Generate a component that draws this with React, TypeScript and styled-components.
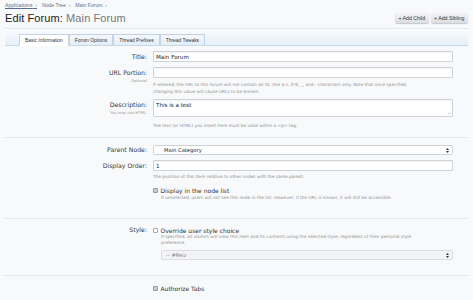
import React from "react";
import styled, { createGlobalStyle } from "styled-components";

const GlobalStyle = createGlobalStyle`
  html, body {
    margin: 0;
    padding: 0;
    background: #f8f9fb;
  }
  body {
    font-family: "DejaVu Sans", "Liberation Sans", sans-serif;
    color: #333;
  }
`;

const Page = styled.div`
  width: 473px;
  height: 300px;
  overflow: hidden;
  padding: 2px 5px 0 5px;
  box-sizing: border-box;
`;

const Header = styled.div`
  display: flex;
  justify-content: space-between;
  align-items: flex-start;
`;

const Breadcrumb = styled.div`
  display: flex;
  gap: 5px;
  font-family: "Liberation Sans", sans-serif;
  font-size: 5.1px;
  line-height: 6px;
  color: #5a6f8f;
`;

const Crumb = styled.span<{ $underline?: boolean }>`
  text-decoration: ${(p) => (p.$underline ? "underline" : "none")};
  &::after {
    content: "  \u203A";
    white-space: pre;
    color: #8a97aa;
  }
`;

const Title = styled.h1`
  margin: 4px 0 0 0;
  font-family: "Liberation Sans", sans-serif;
  font-weight: normal;
  font-size: 11px;
  line-height: 12px;
  color: #222;
  letter-spacing: 0.1px;
`;

const Muted = styled.span`
  color: #777;
`;

const Buttons = styled.div`
  display: flex;
  gap: 2px;
  margin-top: 11px;
`;

const Button = styled.span`
  display: inline-flex;
  align-items: center;
  height: 10px;
  padding: 0 3.5px;
  border-radius: 2px;
  background: linear-gradient(#f4f4f7, #dcdde2);
  box-shadow: 0 0.5px 1px rgba(0, 0, 0, 0.2);
  font-family: "Liberation Sans", sans-serif;
  font-size: 5.2px;
  color: #333;
  white-space: nowrap;
`;

const TabBar = styled.div`
  margin-top: 4px;
  height: 18px;
  box-sizing: border-box;
  border-top: 1px solid #e3e9f0;
  border-bottom: 1px solid #c9d8e7;
  background: linear-gradient(#fafcfe, #e6f0f9);
  display: flex;
  align-items: flex-end;
  padding-left: 14px;
`;

const Tab = styled.span<{ $active?: boolean }>`
  height: 12px;
  box-sizing: border-box;
  margin-bottom: -1px;
  display: inline-flex;
  align-items: center;
  padding: 0 5px;
  border: 0.5px solid #c3d3e4;
  border-bottom: ${(p) => (p.$active ? "1px solid #fff" : "1px solid #c9d8e7")};
  background: ${(p) => (p.$active ? "#fff" : "linear-gradient(#f3f8fc, #e4eef8)")};
  font-family: "Liberation Sans", sans-serif;
  font-size: 4.9px;
  color: #333;
  white-space: nowrap;
`;

const Form = styled.div`
  padding-top: 5px;
  display: flex;
  flex-direction: column;
`;

const Row = styled.div<{ $mt?: number }>`
  display: grid;
  grid-template-columns: 142px 300px;
  column-gap: 6px;
  margin-top: ${(p) => p.$mt ?? 0}px;
`;

const LabelCell = styled.div`
  text-align: right;
`;

const Label = styled.div<{ $lh?: number }>`
  font-size: 6.2px;
  line-height: ${(p) => p.$lh ?? 11}px;
  color: #3a3a3a;
`;

const Hint = styled.div`
  font-size: 3.8px;
  line-height: 5px;
  color: #999;
`;

const Field = styled.div<{ $h?: number; $pad?: number }>`
  height: ${(p) => p.$h ?? 11}px;
  box-sizing: border-box;
  border: 0.5px solid #cfd2d8;
  border-radius: 1px;
  background: #fff;
  box-shadow: inset 0 0.5px 1px rgba(0, 0, 0, 0.08);
  padding: 0 ${(p) => p.$pad ?? 2}px;
  font-size: 5.6px;
  line-height: 10px;
  color: #222;
  position: relative;
`;

const SelectBox = styled.div<{ $disabled?: boolean; $indent?: boolean }>`
  height: 10px;
  box-sizing: border-box;
  margin-left: ${(p) => (p.$indent ? 8 : 0)}px;
  border: 0.5px solid ${(p) => (p.$disabled ? "#dcdde0" : "#cfd2d8")};
  border-radius: 1.5px;
  background: ${(p) => (p.$disabled ? "#f2f3f5" : "#fff")};
  display: flex;
  align-items: center;
  justify-content: space-between;
  padding: 0 3px 0 ${(p) => (p.$disabled ? 4 : 10)}px;
  font-size: 5.2px;
  color: ${(p) => (p.$disabled ? "#888" : "#222")};
`;

const Explain = styled.div<{ $indent?: boolean; $mt?: number }>`
  margin-top: ${(p) => p.$mt ?? 0}px;
  padding-left: ${(p) => (p.$indent ? 8 : 0)}px;
  font-size: 4.3px;
  line-height: 7px;
  color: #8f8f8f;
`;

const TightExplain = styled(Explain)`
  line-height: 6px;
`;

const CheckRow = styled.div<{ $lh?: number; $mt?: number }>`
  display: flex;
  align-items: center;
  gap: 2.5px;
  height: ${(p) => p.$lh ?? 8}px;
  margin-top: ${(p) => p.$mt ?? 0}px;
  font-size: 6px;
  color: #333;
`;

const Box = styled.span<{ $checked?: boolean }>`
  width: 5px;
  height: 5px;
  box-sizing: border-box;
  border-radius: 1px;
  border: 0.5px solid ${(p) => (p.$checked ? "#9a9a9a" : "#a8a8a8")};
  background: ${(p) => (p.$checked ? "#c4c4c4" : "#fff")};
  display: inline-flex;
  align-items: center;
  justify-content: center;
`;

const Divider = styled.div<{ $mt: number; $mb: number }>`
  height: 1px;
  background: #e5e9f0;
  margin: ${(p) => p.$mt}px -1px ${(p) => p.$mb}px -1px;
`;

const Grip = styled.svg`
  position: absolute;
  right: 1px;
  bottom: 1px;
`;

const Spaced = styled.div`
  margin-top: 4px;
`;

const Check: React.FC<{ checked?: boolean }> = ({ checked }) => (
  <Box $checked={checked}>
    {checked && (
      <svg width="4" height="4" viewBox="0 0 8 8">
        <path d="M1.5 4.2 L3.2 6 L6.6 1.8" fill="none" stroke="#fff" strokeWidth="1.4" />
      </svg>
    )}
  </Box>
);

const Arrows = () => (
  <svg width="3" height="5" viewBox="0 0 6 10">
    <path d="M3 0 L6 3.8 L0 3.8 Z M3 10 L6 6.2 L0 6.2 Z" fill="#333" />
  </svg>
);

const App: React.FC = () => {
  return (
    <>
      <GlobalStyle />
      <Page>
        <Header>
          <div>
            <Breadcrumb>
              <Crumb $underline>Applications</Crumb>
              <Crumb>Node Tree</Crumb>
              <Crumb>Main Forum</Crumb>
            </Breadcrumb>
            <Title>
              Edit Forum: <Muted>Main Forum</Muted>
            </Title>
          </div>
          <Buttons>
            <Button>+ Add Child</Button>
            <Button>+ Add Sibling</Button>
          </Buttons>
        </Header>

        <TabBar>
          <Tab $active>Basic Information</Tab>
          <Tab>Forum Options</Tab>
          <Tab>Thread Prefixes</Tab>
          <Tab>Thread Tweaks</Tab>
        </TabBar>

        <Form>
          <Row>
            <LabelCell>
              <Label>Title:</Label>
            </LabelCell>
            <Field>Main Forum</Field>
          </Row>

          <Row $mt={5}>
            <LabelCell>
              <Label>URL Portion:</Label>
              <Hint>Optional</Hint>
            </LabelCell>
            <div>
              <Field />
              <Explain $mt={3}>
                If entered, the URL to this forum will not contain an ID. Use a-z, 0-9, _, and - characters only. Note that once specified,
                <br />
                changing this value will cause URLs to be broken.
              </Explain>
            </div>
          </Row>

          <Row $mt={4}>
            <LabelCell>
              <Label>Description:</Label>
              <Hint>You may use HTML.</Hint>
            </LabelCell>
            <div>
              <Field $h={18}>
                This is a test
                <Grip width="4" height="4" viewBox="0 0 8 8">
                  <path d="M1 7 L7 1 M4 7 L7 4" stroke="#999" strokeWidth="0.8" />
                </Grip>
              </Field>
              <Explain $mt={5}>The text (or HTML) you insert here must be valid within a &lt;p&gt; tag.</Explain>
            </div>
          </Row>

          <Divider $mt={8} $mb={7} />

          <Row>
            <LabelCell>
              <Label $lh={10}>Parent Node:</Label>
            </LabelCell>
            <SelectBox>
              <span>Main Category</span>
              <Arrows />
            </SelectBox>
          </Row>

          <Row $mt={5}>
            <LabelCell>
              <Label>Display Order:</Label>
            </LabelCell>
            <div>
              <Field>1</Field>
              <Explain $mt={2}>The position of this item relative to other nodes with the same parent.</Explain>
              <CheckRow $mt={6}>
                <Check checked />
                <span>Display in the node list</span>
              </CheckRow>
              <Explain $indent>
                If unselected, users will not see this node in the list. However, if the URL is known, it will still be accessible.
              </Explain>
            </div>
          </Row>

          <Divider $mt={17} $mb={7} />

          <Row>
            <LabelCell>
              <Label $lh={8}>Style:</Label>
            </LabelCell>
            <div>
              <CheckRow>
                <Check />
                <span>Override user style choice</span>
              </CheckRow>
              <TightExplain $indent>
                If specified, all visitors will view this item and its contents using the selected style, regardless of their personal style
                <br />
                preference.
              </TightExplain>
              <Spaced>
                <SelectBox $disabled $indent>
                  <span>-- #Reiz</span>
                  <Arrows />
                </SelectBox>
              </Spaced>
            </div>
          </Row>

          <Divider $mt={15} $mb={8} />

          <Row>
            <div />
            <CheckRow>
              <Check checked />
              <span>Authorize Tabs</span>
            </CheckRow>
          </Row>
        </Form>
      </Page>
    </>
  );
};

export default App;
